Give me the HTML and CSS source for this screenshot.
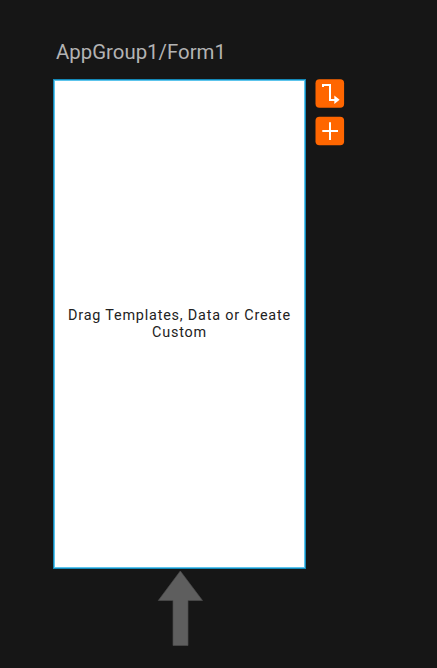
FILE: index.html
```html
<!DOCTYPE html>
<html lang="en">
<head>
<meta charset="utf-8">
<title>AppGroup1/Form1</title>
<link rel="stylesheet" href="styles.css">
</head>
<body>
<main class="canvas">
  <h1 class="title">AppGroup1/Form1</h1>
  <div class="workspace">
    <section class="form"><p class="hint">Drag Templates, Data or Create Custom</p></section>
    <div class="actions">
      <button class="action" aria-label="Connect">
        <svg width="30" height="29" viewBox="0 0 30 29"><rect x=".5" y=".3" width="28.6" height="28.4" rx="4" fill="#ff6600"/><path d="M8 8V6H15V21H20" fill="none" stroke="#fff" stroke-width="2"/><path d="M19.3 16.5L24.6 20.8L19.3 25Z" fill="#fff"/></svg>
      </button>
      <button class="action" aria-label="Add">
        <svg width="30" height="29" viewBox="0 0 30 29"><rect x=".5" y="-.2" width="28.6" height="28.4" rx="4" fill="#ff6600"/><path d="M7.3 14H23M15 5.2V23" fill="none" stroke="#fff" stroke-width="2"/></svg>
      </button>
    </div>
  </div>
  <svg class="arrow" width="46" height="76" viewBox="0 0 46 76"><path d="M23.3 1L45.5 30.5H31V75.5H16V30.5H1.3Z" fill="#5e5e5e" stroke="#4c4c4c" stroke-width=".7"/></svg>
</main>
</body>
</html>
```

FILE: styles.css
```css
* { box-sizing: border-box; }
body { margin: 0; background: #161616; font-family: Roboto, sans-serif; }
.canvas { height: 668px; padding: 40px 0 0 53px; overflow: hidden; }
.title { margin: 0 0 15px 3px; font-size: 20.4px; line-height: 24px; font-weight: 400; color: #b3b3b3; }
.workspace { display: flex; gap: 9px; }
.form {
  width: 253px;
  height: 490px;
  display: flex;
  align-items: center;
  justify-content: center;
  background: #fff;
  border: 1px solid #1488b8;
  box-shadow: inset 0 0 0 1px #5cc4ec;
}
.hint { margin: 0; width: 242px; text-align: center; font-size: 14.4px; line-height: 17px; letter-spacing: .8px; color: #222; }
.actions { display: flex; flex-direction: column; gap: 9px; }
.action { width: 30px; height: 29px; padding: 0; border: 0; background: none; }
.action svg, .arrow { display: block; overflow: visible; }
.arrow { margin: 1px 0 0 104px; }
```
